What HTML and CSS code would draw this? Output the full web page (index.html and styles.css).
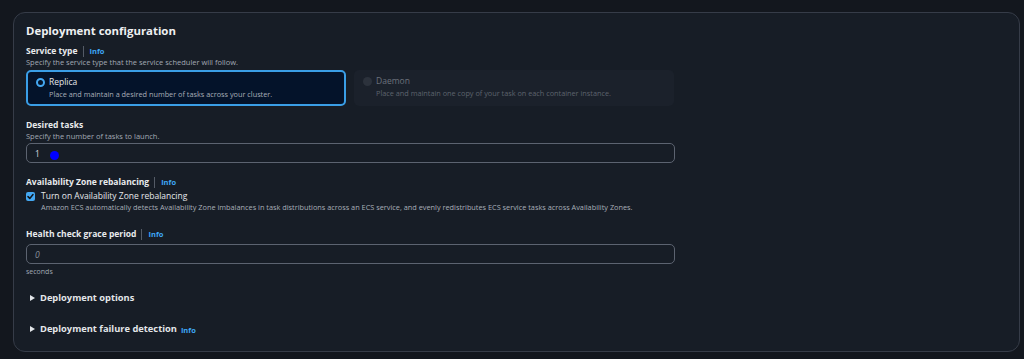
FILE: index.html
```html
<!DOCTYPE html>
<html>
<head>
<meta charset="utf-8">
<link rel="stylesheet" href="styles.css">
</head>
<body>
<div class="card">
  <h2 class="title">Deployment configuration</h2>

  <div class="field f-service">
    <div class="label"><span>Service type</span><span class="sep"></span><a class="info">Info</a></div>
    <div class="desc">Specify the service type that the service scheduler will follow.</div>
    <div class="tiles">
      <div class="tile selected">
        <span class="radio on"></span>
        <div class="tile-text">
          <div class="tile-name">Replica</div>
          <div class="tile-desc">Place and maintain a desired number of tasks across your cluster.</div>
        </div>
      </div>
      <div class="tile disabled">
        <span class="radio off"></span>
        <div class="tile-text">
          <div class="tile-name">Daemon</div>
          <div class="tile-desc">Place and maintain one copy of your task on each container instance.</div>
        </div>
      </div>
    </div>
  </div>

  <div class="field f-desired">
    <div class="label"><span>Desired tasks</span></div>
    <div class="desc">Specify the number of tasks to launch.</div>
    <div class="input"><span class="value">1</span><span class="cursor-dot"></span></div>
  </div>

  <div class="field f-az">
    <div class="label"><span>Availability Zone rebalancing</span><span class="sep"></span><a class="info">Info</a></div>
    <div class="check-row">
      <span class="checkbox"><svg width="9" height="9" viewBox="0 0 9 9"><path d="M2 4.6 L3.8 6.4 L7 2.6" fill="none" stroke="#0f141a" stroke-width="1.5" stroke-linecap="round" stroke-linejoin="round"/></svg></span>
      <div class="check-text">
        <div class="check-name">Turn on Availability Zone rebalancing</div>
        <div class="check-desc">Amazon ECS automatically detects Availability Zone imbalances in task distributions across an ECS service, and evenly redistributes ECS service tasks across Availability Zones.</div>
      </div>
    </div>
  </div>

  <div class="field f-health">
    <div class="label"><span>Health check grace period</span><span class="sep"></span><a class="info">Info</a></div>
    <div class="input"><span class="placeholder">0</span></div>
    <div class="constraint">seconds</div>
  </div>

  <div class="expander e-options"><span class="caret"></span><span class="exp-title">Deployment options</span></div>
  <div class="expander e-failure"><span class="caret"></span><span class="exp-title">Deployment failure detection</span><a class="info">Info</a></div>
</div>
</body>
</html>
```
FILE: styles.css
```css
* { box-sizing: border-box; }
html, body { margin: 0; padding: 0; }
body {
  background: #13171e;
  font-family: "Open Sans", "Noto Sans", sans-serif;
  color: #e6e8eb;
  width: 1024px;
  height: 359px;
  overflow: hidden;
  padding: 12px 4px 0 13px;
}
.card {
  width: 1007px;
  height: 340px;
  background: #171d26;
  border: 1px solid #363c48;
  border-radius: 12px;
  padding: 10px 12px 0 12px;
  display: flex;
  flex-direction: column;
}
.title {
  margin: 0;
  font-size: 11.4px;
  font-weight: 700;
  line-height: 16px;
  color: #eef0f2;
}
.field { width: 649px; display: flex; flex-direction: column; }
.f-service { margin-top: 6px; }
.f-desired { margin-top: 13px; }
.f-desired .input { margin-top: 1px; }
.f-az { margin-top: 13px; }
.f-health { margin-top: 15px; }
.label {
  display: flex;
  align-items: center;
  font-size: 8.5px;
  font-weight: 700;
  line-height: 12px;
  color: #e9ebed;
}
.sep {
  width: 1px;
  height: 11px;
  background: #545b66;
  margin: 0 6px 0 5px;
}
.info {
  color: #3ea7f5;
  font-size: 7.5px;
  font-weight: 700;
}
.desc {
  font-size: 7.5px;
  line-height: 11px;
  color: #a1a8b3;
}
.tiles {
  display: flex;
  gap: 8px;
  margin-top: 2px;
}
.tile {
  flex: 0 0 320px;
  height: 36px;
  border-radius: 5px;
  display: flex;
  align-items: flex-start;
  padding: 5px 9px;
  gap: 4px;
}
.tile.selected {
  background: #04132a;
  border: 2px solid #3a9ee6;
  padding: 4px 8px;
}
.tile.disabled {
  background: #1b212b;
}
.radio {
  width: 9px;
  height: 9px;
  border-radius: 50%;
  margin-top: 2px;
  flex: none;
}
.radio.on { border: 2.5px solid #44a8f2; background: #04132a; }
.radio.off { background: #2c323c; }
.tile-name { font-size: 8.5px; line-height: 12px; color: #e6e8eb; }
.tile-desc { font-size: 7.3px; line-height: 12px; color: #a8aeb8; }
.disabled .tile-name { color: #6b717b; }
.disabled .tile-desc { color: #5d636d; }
.input {
  height: 20px;
  border: 1px solid #5c6370;
  border-radius: 5px;
  display: flex;
  align-items: center;
  padding: 0 8px;
  font-size: 8.5px;
}
.f-health .input { margin-top: 4px; }
.value { color: #d5d9de; }
.cursor-dot {
  flex: none;
  width: 9px;
  height: 9px;
  border-radius: 50%;
  background: #0000ff;
  margin-left: 10px;
  margin-top: 4px;
}
.placeholder { color: #8a919b; font-style: italic; }
.check-row { display: flex; gap: 6px; margin-top: 2px; }
.checkbox {
  width: 9px;
  height: 9px;
  border-radius: 2px;
  background: #44a8f2;
  flex: none;
  margin-top: 2px;
  display: flex;
}
.check-name { font-size: 8.5px; line-height: 12px; color: #e6e8eb; }
.check-desc { font-size: 7.33px; line-height: 11px; color: #a8aeb8; white-space: nowrap; }
.constraint { font-size: 7px; line-height: 11px; color: #a1a8b3; margin-top: 2px; }
.expander {
  display: flex;
  align-items: center;
  font-size: 9.3px;
  font-weight: 700;
  line-height: 14px;
  color: #e3e6e9;
  padding-left: 4px;
}
.e-options { margin-top: 14px; }
.e-failure { margin-top: 16px; }
.caret {
  width: 0; height: 0;
  border-top: 3.5px solid transparent;
  border-bottom: 3.5px solid transparent;
  border-left: 5px solid #e3e6e9;
  margin-right: 5px;
}
.e-failure .info { margin-left: 4px; font-size: 7.5px; margin-top: 2px; }
```
